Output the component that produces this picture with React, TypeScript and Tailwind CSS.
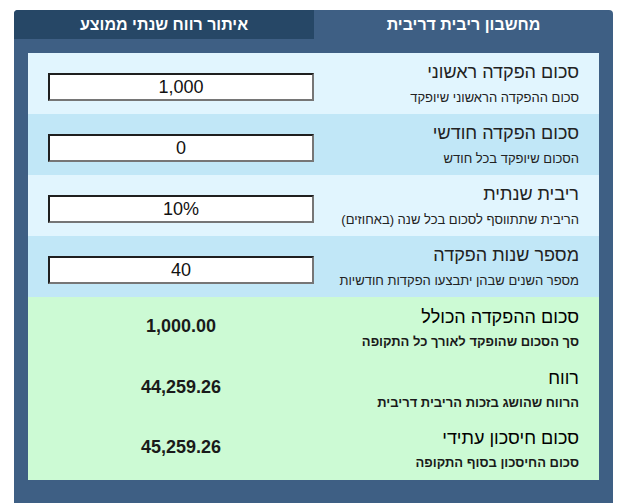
import React from 'react';

const inputs = [
  { title: 'סכום הפקדה ראשוני', sub: 'סכום ההפקדה הראשוני שיופקד', value: '1,000', bg: 'bg-[#e1f5fe]' },
  { title: 'סכום הפקדה חודשי', sub: 'הסכום שיופקד בכל חודש', value: '0', bg: 'bg-[#c1e7f7]' },
  { title: 'ריבית שנתית', sub: 'הריבית שתתווסף לסכום בכל שנה (באחוזים)', value: '10%', bg: 'bg-[#e1f5fe]' },
  { title: 'מספר שנות הפקדה', sub: 'מספר השנים שבהן יתבצעו הפקדות חודשיות', value: '40', bg: 'bg-[#c1e7f7]' },
];

const results = [
  { title: 'סכום ההפקדה הכולל', sub: 'סך הסכום שהופקד לאורך כל התקופה', value: '1,000.00', h: 'h-[61px]' },
  { title: 'רווח', sub: 'הרווח שהושג בזכות הריבית דריבית', value: '44,259.26', h: 'h-[60px]' },
  { title: 'סכום חיסכון עתידי', sub: 'סכום החיסכון בסוף התקופה', value: '45,259.26', h: 'h-[54px]' },
];

export default function App() {
  return (
    <div className="bg-white pt-[10px] pl-[14px] w-[628px] h-[503px] overflow-hidden font-['Liberation_Sans',Arial,sans-serif]">
      <div dir="rtl" className="w-[599px] bg-[#3e5f84] rounded-t-[4px] pb-[40px]">
        {/* Tabs */}
        <div className="flex h-[29px]">
          <div className="flex-1 flex items-center justify-center text-[16px] font-bold text-white rounded-tr-[4px] rounded-tl-[3px]">
            מחשבון ריבית דריבית
          </div>
          <div className="w-[300px] flex items-center justify-center text-[16px] font-bold text-white bg-[#264766] rounded-tl-[4px]">
            איתור רווח שנתי ממוצע
          </div>
        </div>

        <div className="px-[14px] pt-[14px]">
          {inputs.map((row) => (
            <div key={row.title} className={`${row.bg} flex justify-between h-[61px] pr-5 pl-5`}>
              <div className="pt-[7px] text-[#222]">
                <div className="text-[18px] leading-[24px]">{row.title}</div>
                <div className="text-[13px] leading-[18px] mt-[5px]">{row.sub}</div>
              </div>
              <div className="mt-5 w-[266px] h-[28px] bg-white border-2 border-t-[#1f1f1f] border-l-[#1f1f1f] border-r-[#767676] border-b-[#767676] flex items-center justify-center text-[18px] text-[#111]">
                <span dir="ltr">{row.value}</span>
              </div>
            </div>
          ))}

          <div className="bg-[#ccfad4] pt-[8px]">
            {results.map((row) => (
              <div key={row.title} className={`${row.h} flex justify-between pr-5 pl-5 text-[#1a1a1a]`}>
                <div>
                  <div className="text-[18px] leading-[24px] font-medium text-black">{row.title}</div>
                  <div className="text-[13px] leading-[18px] mt-[4px] font-bold">{row.sub}</div>
                </div>
                <div className="w-[266px] flex justify-center pt-[9px] text-[18px] font-bold leading-[24px]">
                  <span dir="ltr">{row.value}</span>
                </div>
              </div>
            ))}
          </div>
        </div>
      </div>
    </div>
  );
}
